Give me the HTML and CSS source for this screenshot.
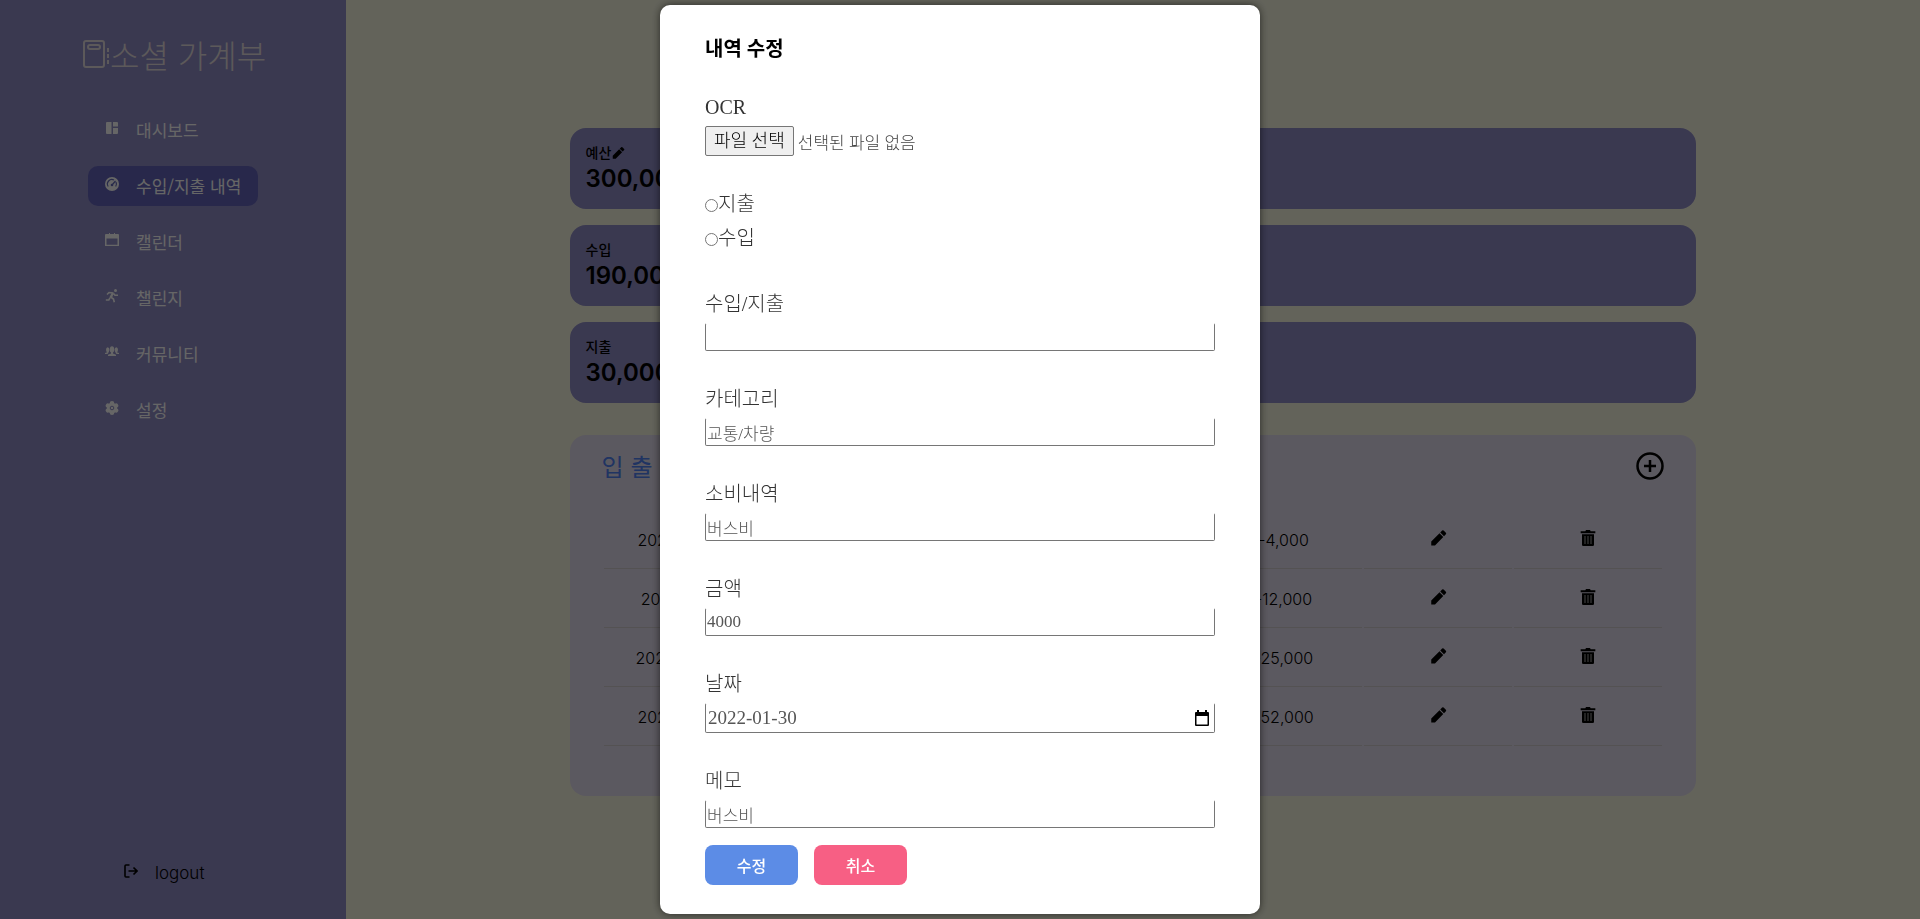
FILE: index.html
```html
<!DOCTYPE html>
<html lang="ko">
<head>
<meta charset="utf-8">
<title>소셜 가계부</title>
<link rel="stylesheet" href="styles.css">
</head>
<body>
<svg class="sprite" aria-hidden="true">
  <symbol id="pencil" viewBox="0 0 24 24"><path d="M3 22v-5.500L14 5.500l5 5L8 22zM15 4.500l2.500-2.500q1-1 2 0l3 3q1 1 0 2L20 9.500z"/></symbol>
  <symbol id="trash" viewBox="0 0 24 24"><path d="M1 2h7l1-2h6l1 2h7v3H1z"/><path d="M3 6.500h18V22q0 2-2 2H5q-2 0-2-2z"/><path d="M7.500 9v12M12 9v12M16.500 9v12" stroke="#777" stroke-width="2.200"/></symbol>
</svg>
<div class="app">
  <aside class="sidebar">
    <h1 class="logo">
      <svg class="logo-icon" viewBox="0 0 27 28" fill="none" stroke="currentColor" stroke-width="2"><rect x="1" y="1" width="20" height="26" rx="2"/><rect x="5" y="5" width="12" height="4" rx="2"/><path d="M25 8v4M25 14v4M25 20v4"/></svg>
      <span>소셜 가계부</span>
    </h1>
    <nav class="menu">
      <a href="#" class="menu-item"><svg class="icon" viewBox="0 0 14 14"><path d="M1 2q0-1 1-1h4.500v12H2q-1 0-1-1zM8 1h4q1 0 1 1v3.500H8zM8 7h5v5q0 1-1 1H8z"/></svg>대시보드</a>
      <a href="#" class="menu-item active"><svg class="icon" viewBox="0 0 14 14"><circle cx="7" cy="7" r="7"/><path d="M3.200 9.500A4.500 4.500 0 0 1 9 3M11 5a4.500 4.500 0 0 1-.3 4.500M7 8l3.500-4" fill="none" stroke="#646bbb" stroke-width="1.200"/><circle cx="7" cy="8" r="1.300" fill="#646bbb"/></svg>수입/지출 내역</a>
      <a href="#" class="menu-item"><svg class="icon" viewBox="0 0 14 14"><path d="M0 2q0-1 1-1h3V0h1v1h4V0h1v1h3q1 0 1 1v11H0zM1.500 5.500v6.200h11V5.500z" fill-rule="evenodd"/></svg>캘린더</a>
      <a href="#" class="menu-item"><svg class="icon" viewBox="0 0 14 14"><circle cx="10.500" cy="1.500" r="1.500"/><path d="M2 5.500 4 3.500l3.500.5L5.500 8l3 2 .8 3.300M5 8.800 3.800 11H.8M8.500 4.500 10 6.300h3M8 4 6.500 8" fill="none" stroke="currentColor" stroke-width="1.600"/></svg>챌린지</a>
      <a href="#" class="menu-item"><svg class="icon" viewBox="0 0 14 14"><ellipse cx="7" cy="4.500" rx="2.200" ry="3.200"/><ellipse cx="2.700" cy="4.800" rx="1.700" ry="2.500"/><ellipse cx="11.300" cy="4.800" rx="1.700" ry="2.500"/><path d="M6 7h2v1.500l3 1.200V11H3V9.700l3-1.200zM2 6.500h1.500v1.200L2.500 9H0V8l2-.7zM10.500 6.500H12v.8l2 .7v1h-2.500l-1-1.300z"/></svg>커뮤니티</a>
      <a href="#" class="menu-item"><svg class="icon" viewBox="0 0 14 14"><g stroke="currentColor" stroke-width="4.600" stroke-linecap="round"><path d="M7 2.300v9.400M3 4.600l8 4.800M3 9.400l8-4.800"/></g><circle cx="7" cy="7" r="5.200"/><circle cx="7" cy="7" r="1.800" fill="none" stroke="#918ec8"/></svg>설정</a>
    </nav>
    <button type="button" class="logout"><svg class="icon" viewBox="0 0 14 14" fill="none" stroke="currentColor" stroke-width="1.600"><path d="M5.500 1H2Q1 1 1 2v10q0 1 1 1h3.500M4.500 7H13M9.500 3.500 13 7l-3.500 3.500"/></svg>logout</button>
  </aside>
  <main class="content">
    <section class="card"><h2>예산<svg viewBox="0 0 24 24"><use href="#pencil"/></svg></h2><p>300,000</p></section>
    <section class="card"><h2>수입</h2><p>190,000</p></section>
    <section class="card"><h2>지출</h2><p>30,000</p></section>
    <section class="panel">
      <header class="panel-head">
        <h2>입 출 금</h2>
        <button type="button" class="bare" aria-label="추가"><svg class="plus" viewBox="0 0 28 28" fill="none" stroke="currentColor" stroke-width="2.500"><circle cx="14" cy="14" r="12.500"/><path d="M14 8v12M8 14h12"/></svg></button>
      </header>
      <table class="list">
        <colgroup><col class="date-col"><col><col><col><col class="amount-col"><col class="tool-col"><col class="tool-col"></colgroup>
        <tbody>
        <tr><td>2022-01-30</td><td></td><td></td><td></td><td>-4,000</td><td><button type="button" class="bare" aria-label="수정"><svg viewBox="0 0 24 24"><use href="#pencil"/></svg></button></td><td><button type="button" class="bare" aria-label="삭제"><svg class="bin" viewBox="0 0 24 24"><use href="#trash"/></svg></button></td></tr>
        <tr><td>2022-01-11</td><td></td><td></td><td></td><td>-12,000</td><td><button type="button" class="bare" aria-label="수정"><svg viewBox="0 0 24 24"><use href="#pencil"/></svg></button></td><td><button type="button" class="bare" aria-label="삭제"><svg class="bin" viewBox="0 0 24 24"><use href="#trash"/></svg></button></td></tr>
        <tr><td>2022-02-02</td><td></td><td></td><td></td><td>-25,000</td><td><button type="button" class="bare" aria-label="수정"><svg viewBox="0 0 24 24"><use href="#pencil"/></svg></button></td><td><button type="button" class="bare" aria-label="삭제"><svg class="bin" viewBox="0 0 24 24"><use href="#trash"/></svg></button></td></tr>
        <tr><td>2022-01-30</td><td></td><td></td><td></td><td>-52,000</td><td><button type="button" class="bare" aria-label="수정"><svg viewBox="0 0 24 24"><use href="#pencil"/></svg></button></td><td><button type="button" class="bare" aria-label="삭제"><svg class="bin" viewBox="0 0 24 24"><use href="#trash"/></svg></button></td></tr>
        </tbody>
      </table>
    </section>
  </main>
</div>
<div class="overlay">
  <div class="modal" role="dialog" aria-labelledby="modal-title">
    <h2 id="modal-title">내역 수정</h2>
    <form class="form">
      <div class="field">
        <label for="ocr">OCR</label>
        <div class="file">
          <input type="file" id="ocr" class="file-input">
          <label for="ocr" class="file-button">파일 선택</label>
          <span>선택된 파일 없음</span>
        </div>
      </div>
      <div class="radios">
        <label><input type="radio" name="kind">지출</label>
        <label><input type="radio" name="kind">수입</label>
      </div>
      <div class="field"><label for="kind">수입/지출</label><input class="text" id="kind" type="text"></div>
      <div class="field"><label for="category">카테고리</label><input class="text" id="category" type="text" value="교통/차량"></div>
      <div class="field"><label for="item">소비내역</label><input class="text" id="item" type="text" value="버스비"></div>
      <div class="field"><label for="amount">금액</label><input class="text" id="amount" type="text" value="4000"></div>
      <div class="field">
        <label for="date">날짜</label>
        <div class="text date">
          <input id="date" type="text" value="2022-01-30">
          <button type="button" class="bare" aria-label="달력"><svg viewBox="0 0 14 16"><path d="M0 3q0-1 1-1h1V0h2v2h6V0h2v2h1q1 0 1 1v12q0 1-1 1H1q-1 0-1-1zM1.500 6v8.500h11V6z" fill-rule="evenodd"/></svg></button>
        </div>
      </div>
      <div class="field"><label for="memo">메모</label><input class="text" id="memo" type="text" value="버스비"></div>
      <div class="actions">
        <button type="submit" class="btn save">수정</button>
        <button type="button" class="btn cancel">취소</button>
      </div>
    </form>
  </div>
</div>
</body>
</html>
```
FILE: styles.css
```css
* { box-sizing: border-box; }
body, h1, h2, p { margin: 0; }
body {
  font-family: Inter, "Noto Sans CJK KR", sans-serif;
  font-size: 16px;
  font-weight: 300;
  color: #000;
}
button, input { font: inherit; color: inherit; }
svg { fill: currentColor; display: block; }
svg[fill="none"] { fill: none; }
.sprite { position: absolute; width: 0; height: 0; }
.bare { border: 0; padding: 0; background: none; }

.app { display: flex; min-height: 100vh; background: #f8f8e2; }

.sidebar {
  width: 18%;
  flex: none;
  display: flex;
  flex-direction: column;
  padding: 32px 0 32px 83px;
  background: #918ec8;
}
.logo {
  display: flex;
  align-items: center;
  font: 300 32px/44px "Noto Sans CJK KR", sans-serif;
  color: #e6dfe0;
}
.logo-icon { width: 27px; height: 28px; }
.menu {
  display: flex;
  flex-direction: column;
  align-items: flex-start;
  gap: 16px;
  margin: 34px 0 auto 5px;
}
.menu-item {
  display: flex;
  align-items: center;
  gap: 17px;
  height: 40px;
  padding: 0 17px;
  border-radius: 10px;
  font: 400 17px/40px "Noto Sans CJK KR", sans-serif;
  color: #fff;
  text-decoration: none;
}
.active { background: #6464bb; }
.icon { width: 14px; height: 14px; margin-bottom: 5px; }
.logout {
  display: flex;
  align-items: center;
  gap: 17px;
  margin-left: 41px;
  padding: 0;
  border: 0;
  background: none;
  font-size: 17px;
  line-height: 28px;
}

.content { flex: 1; padding: 128px 224px 0; }
.card {
  height: 81px;
  margin-bottom: 16px;
  padding: 14px 16px;
  border-radius: 16px;
  background: #918ec8;
}
.card h2 { display: flex; align-items: center; font-size: 14px; line-height: 22px; font-weight: 500; }
.card h2 svg { width: 14px; height: 14px; }
.card p { font-size: 24px; line-height: 30px; font-weight: 600; }
.panel {
  margin-top: 32px;
  padding: 12px 32px 48px;
  border-radius: 16px;
  background: #e4deef;
}
.panel-head { display: flex; justify-content: space-between; align-items: center; height: 38px; }
.panel-head h2 { font: 400 24px/38px "Noto Sans CJK KR", sans-serif; color: #5082f5; }
.plus { width: 28px; height: 28px; }
.list { width: 100%; margin-top: 25px; table-layout: fixed; border-spacing: 2px; }
.list td { height: 57px; padding: 0; text-align: center; border-bottom: 1px solid #d2cdcf; }
.list .bare { display: block; margin: 0 auto 4px; }
.list svg { width: 18px; height: 18px; }
.list .bin { width: 16px; height: 16px; }
.date-col { width: 157px; }
.amount-col { width: 157px; }
.tool-col { width: 148px; }

.overlay {
  position: fixed;
  inset: 0;
  display: flex;
  align-items: center;
  justify-content: center;
  background: rgba(0, 0, 0, .6);
}
.modal {
  width: 600px;
  padding: 30px 45px 29px;
  border-radius: 10px;
  background: #fff;
  box-shadow: 0 0 8px rgba(0, 0, 0, .6);
  font-family: "Liberation Serif", "Noto Sans CJK KR", serif;
}
.modal h2 { margin-bottom: 30px; font-size: 20px; line-height: 28px; font-weight: 600; }
.field { display: grid; gap: 5px; margin-bottom: 34px; }
.field > label, .radios label { font-size: 20px; line-height: 28px; color: #333; }
.file { display: flex; align-items: center; gap: 4px; height: 30px; font-size: 17px; color: #444; }
.file-input { position: absolute; width: 1px; height: 1px; opacity: 0; }
.file-button {
  padding: 0 8px;
  border: 1px solid #767676;
  border-radius: 2px;
  background: #efefef;
  font-size: 18px;
  line-height: 28px;
  color: #000;
}
.radios { display: grid; justify-items: start; gap: 6px; margin-bottom: 38px; }
.radios label { display: flex; align-items: center; }
.radios input { appearance: none; width: 13px; height: 13px; margin: 2px 0 0; border: 1px solid #767676; border-radius: 50%; }
.radios input:checked { background: #767676; }
.text {
  width: 100%;
  height: 28px;
  padding: 1px;
  border: 1px solid #767676;
  border-top-color: transparent;
  border-radius: 2px;
  background: #fff;
  font-size: 17px;
  color: #555;
}
.date { display: flex; align-items: center; height: 30px; padding: 1px 5px 1px 2px; font-size: 19px; }
.date input { flex: 1; padding: 0; border: 0; outline: 0; background: none; }
.date svg { width: 14px; height: 16px; color: #000; }
.field:has(#memo) { margin-bottom: 17px; }
.actions { display: flex; gap: 16px; }
.btn {
  width: 93px;
  height: 40px;
  border: 0;
  border-radius: 8px;
  font-size: 16px;
  font-weight: 500;
  color: #fff;
}
.save { background: #5c8ce6; }
.cancel { background: #f75f84; }
```
